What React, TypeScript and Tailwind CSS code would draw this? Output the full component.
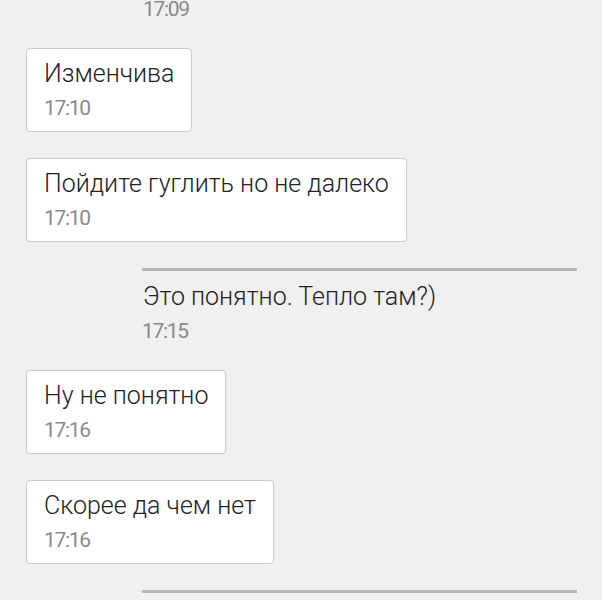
const feed: ({ kind: 'in' | 'out'; text: string; time: string })[] = [
  { kind: 'in', text: 'Изменчива', time: '17:10' },
  { kind: 'in', text: 'Пойдите гуглить но не далеко', time: '17:10' },
  { kind: 'out', text: 'Это понятно. Тепло там?)', time: '17:15' },
  { kind: 'in', text: 'Ну не понятно', time: '17:16' },
  { kind: 'in', text: 'Скорее да чем нет', time: '17:16' },
]

function Time({ value }: { value: string }) {
  return <div className="mt-[7px] text-[21px] leading-[26px] tracking-[-1.3px] text-[#8a8a8a]">{value}</div>
}

function Incoming({ text, time }: { text: string; time: string }) {
  return (
    <div className="ml-[26px] self-start rounded-[4px] border border-[#c9c9c9] bg-white px-[17px] pt-[10px] pb-[10px]">
      <div className="text-[25px] leading-[29px] font-light text-[#222]">{text}</div>
      <Time value={time} />
    </div>
  )
}

function Outgoing({ text, time }: { text: string; time: string }) {
  return (
    <div className="ml-[142px] mr-[25px]">
      <div className="h-[3px] bg-[#b8b8b8]" />
      <div className="mt-[11px] pl-px text-[25px] leading-[29px] font-light text-[#222]">{text}</div>
      <Time value={time} />
    </div>
  )
}

export default function App() {
  return (
    <div className="h-[600px] w-[602px] overflow-hidden bg-[#eff0ef]" style={{ fontFamily: 'Roboto, "Noto Sans", sans-serif' }}>
      <div className="flex flex-col gap-[26px]">
        <div className="-mt-[4px] ml-[143px] text-[21px] leading-[26px] tracking-[-1.3px] text-[#8a8a8a]">17:09</div>
        {feed.map((m, i) =>
          m.kind === 'in' ? <Incoming key={i} text={m.text} time={m.time} /> : <Outgoing key={i} text={m.text} time={m.time} />
        )}
        <div className="ml-[142px] mr-[25px] h-[3px] bg-[#b8b8b8]" />
      </div>
    </div>
  )
}
